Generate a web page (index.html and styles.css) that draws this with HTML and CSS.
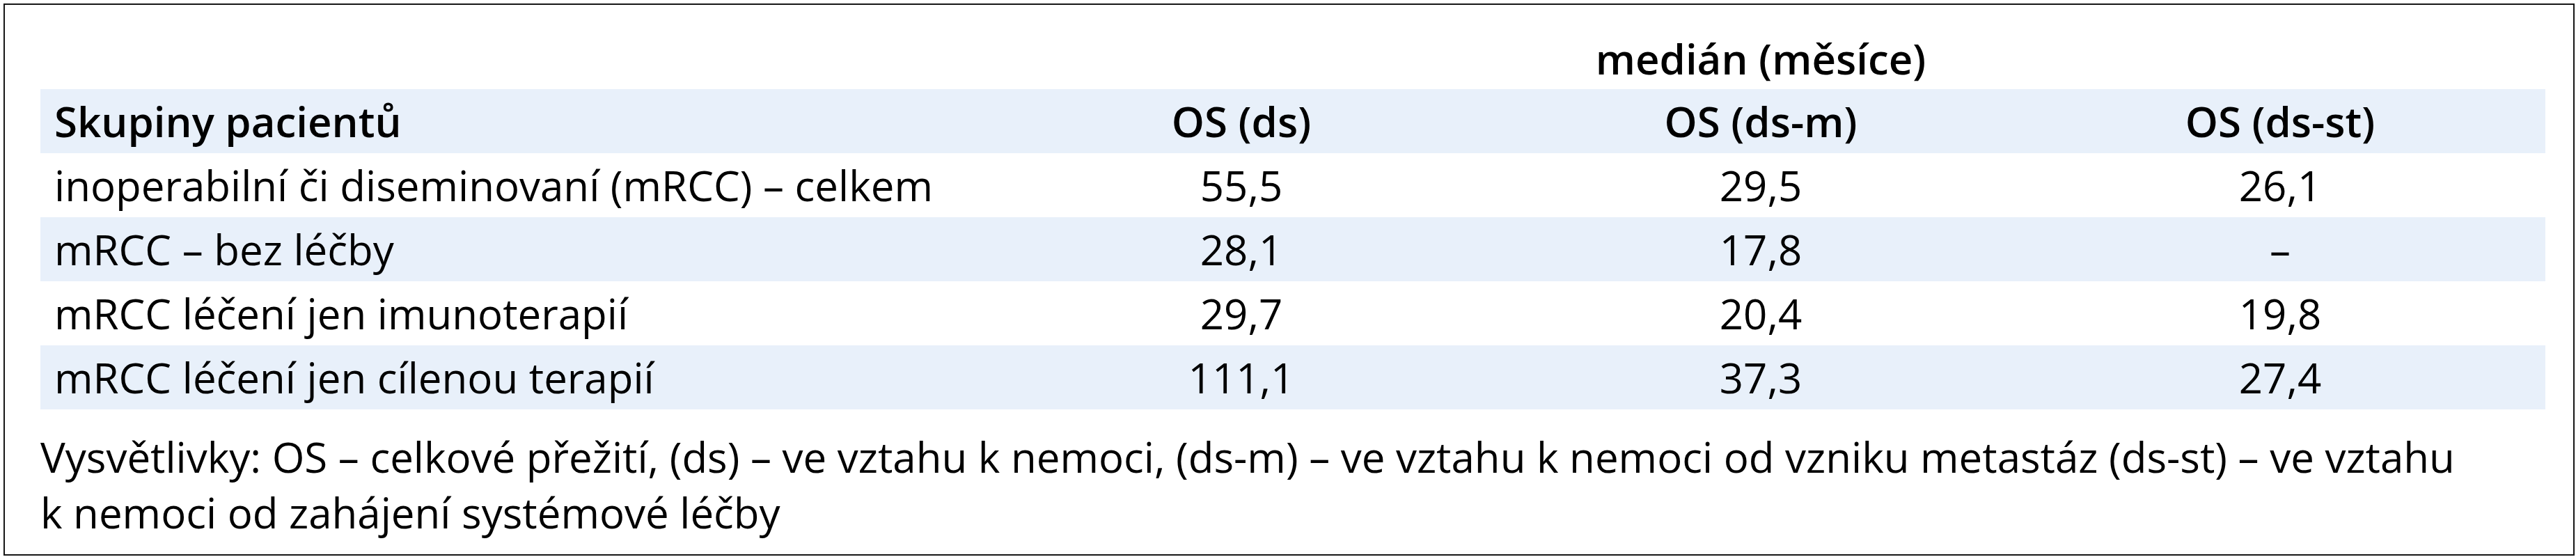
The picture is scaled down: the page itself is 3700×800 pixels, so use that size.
FILE: index.html
```html
<!DOCTYPE html>
<html lang="cs">
<head>
<meta charset="utf-8">
<title>Medián přežití</title>
<link rel="stylesheet" href="styles.css">
</head>
<body>
<div class="panel">
  <div class="grid">
    <div class="cell group-head">medián (měsíce)</div>

    <div class="row head">
      <div class="cell label">Skupiny pacientů</div>
      <div class="cell num">OS (ds)</div>
      <div class="cell num">OS (ds-m)</div>
      <div class="cell num">OS (ds-st)</div>
    </div>

    <div class="row">
      <div class="cell label">inoperabilní či diseminovaní (mRCC) – celkem</div>
      <div class="cell num">55,5</div>
      <div class="cell num">29,5</div>
      <div class="cell num">26,1</div>
    </div>

    <div class="row alt">
      <div class="cell label">mRCC – bez léčby</div>
      <div class="cell num">28,1</div>
      <div class="cell num">17,8</div>
      <div class="cell num">–</div>
    </div>

    <div class="row">
      <div class="cell label">mRCC léčení jen imunoterapií</div>
      <div class="cell num">29,7</div>
      <div class="cell num">20,4</div>
      <div class="cell num">19,8</div>
    </div>

    <div class="row alt">
      <div class="cell label">mRCC léčení jen cílenou terapií</div>
      <div class="cell num">111,1</div>
      <div class="cell num">37,3</div>
      <div class="cell num">27,4</div>
    </div>
  </div>

  <p class="note">Vysvětlivky: OS – celkové přežití, (ds) – ve vztahu k nemoci, (ds-m) – ve vztahu k nemoci od vzniku metastáz (ds-st) – ve vztahu k nemoci od zahájení systémové léčby</p>
</div>
</body>
</html>
```

FILE: styles.css
```css
html, body {
  margin: 0;
  padding: 0;
  background: #ffffff;
}

body {
  font-family: "Open Sans", "Noto Sans", "Liberation Sans", sans-serif;
  font-size: 60px;
  color: #000000;
}

.panel {
  box-sizing: border-box;
  margin: 5px 0 0 5px;
  width: 3693px;
  height: 793px;
  border: 2px solid #161616;
  padding: 33px 40px 20px 51px;
  background: #ffffff;
}

.grid {
  display: grid;
  grid-template-columns: 1fr repeat(3, 746px);
  padding-right: 8px;
}

.row {
  display: contents;
}

.cell {
  line-height: 92px;
  white-space: nowrap;
}

.group-head {
  grid-column: 2 / 5;
  text-align: center;
  font-weight: 600;
  line-height: 88px;
}

.label {
  padding-left: 20px;
}

.num {
  text-align: center;
}

.head .cell {
  font-weight: 600;
  background: #e8f0fa;
}

.alt .cell {
  background: #e8f0fa;
}

/* extend the row tint under the trailing gutter */
.head .cell:last-child,
.alt .cell:last-child {
  margin-right: -8px;
  padding-right: 8px;
}

.note {
  margin: 28px 0 0 0;
  max-width: 3490px;
  line-height: 80px;
}
```
